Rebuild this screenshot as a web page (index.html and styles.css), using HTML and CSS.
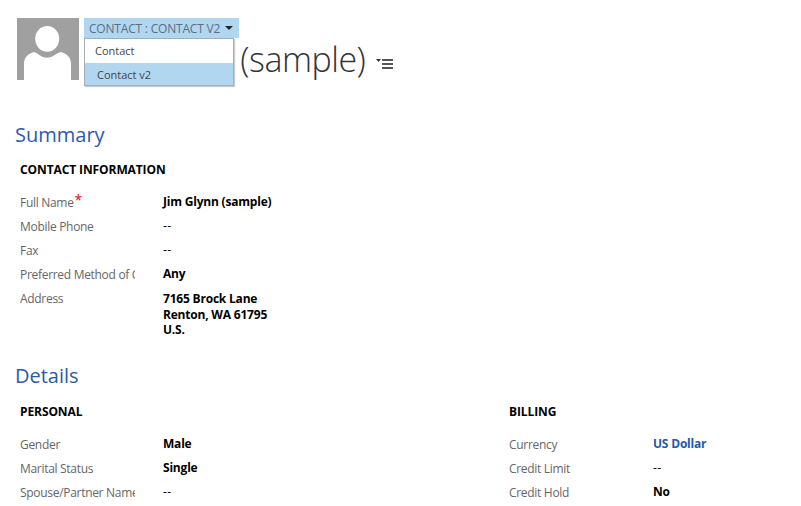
FILE: index.html
```html
<!DOCTYPE html>
<html lang="en">
<head>
  <meta charset="UTF-8" />
  <title>Jim Glynn (sample)</title>
  <link rel="stylesheet" href="styles.css">
</head>
<body>

<div class="page">
  <div class="header">
    <svg class="avatar" viewBox="0 0 62 62">
      <rect width="62" height="62" fill="#a0a0a0"/>
      <ellipse cx="30.200" cy="20.800" rx="12" ry="12.900" fill="#fff"/>
      <path d="M7 62V46c0-7 4-10 10-12 4 1 7 5.700 13 5.700S39 35 44 34c6 2 10 5 10 12v16z" fill="#fff"/>
    </svg>
    <div class="title-block">
      <div class="form-selector">
        <span>CONTACT : CONTACT V2</span>
        <span class="caret"></span>
      </div>
      <div class="form-menu">
        <div class="menu-item">Contact</div>
        <div class="menu-item selected">Contact v2</div>
      </div>
      <div class="title-row">
        <h1 class="record-name"><span class="first-name">Jim Glynn</span> (sample)</h1>
        <svg class="title-icon" viewBox="0 0 17 10">
          <path d="M0 0h5L2.500 3z" fill="#333"/>
          <path d="M6 0h11v2H6zM6 4h11v2H6zM6 8h11v2H6z" fill="#555"/>
        </svg>
      </div>
    </div>
  </div>

  <h2 class="section-title summary-title">Summary</h2>
  <div class="section-body">
    <h3 class="group-title">CONTACT INFORMATION</h3>
    <div class="fields">
      <div class="label">Full Name<span class="required">*</span></div>
      <div class="value">Jim Glynn (sample)</div>
      <div class="label">Mobile Phone</div>
      <div class="value empty">--</div>
      <div class="label">Fax</div>
      <div class="value empty">--</div>
      <div class="label">Preferred Method of Contact</div>
      <div class="value">Any</div>
      <div class="label">Address</div>
      <div class="value address">7165 Brock Lane<br>Renton, WA 61795<br>U.S.</div>
    </div>
  </div>

  <h2 class="section-title details-title">Details</h2>
  <div class="columns">
    <div class="column">
      <h3 class="group-title">PERSONAL</h3>
      <div class="fields">
        <div class="label">Gender</div>
        <div class="value">Male</div>
        <div class="label">Marital Status</div>
        <div class="value">Single</div>
        <div class="label">Spouse/Partner Name</div>
        <div class="value empty">--</div>
      </div>
    </div>
    <div class="column">
      <h3 class="group-title">BILLING</h3>
      <div class="fields">
        <div class="label">Currency</div>
        <div class="value link">US Dollar</div>
        <div class="label">Credit Limit</div>
        <div class="value empty">--</div>
        <div class="label">Credit Hold</div>
        <div class="value">No</div>
      </div>
    </div>
  </div>
</div>

</body>
</html>
```

FILE: styles.css
```css
* { box-sizing: border-box; }

html, body {
  margin: 0;
  height: 100%;
  overflow: hidden;
}

body {
  font-family: 'Open Sans', 'Noto Sans', sans-serif;
  font-size: 12px;
  color: #000;
  background: #fff;
}

.page {
  padding-top: 18px;
}

.header {
  display: flex;
  padding-left: 17px;
}

.avatar {
  width: 62px;
  height: 62px;
  flex: none;
}

.title-block {
  position: relative;
  margin-left: 5px;
}

.form-selector {
  display: inline-flex;
  align-items: center;
  gap: 5px;
  width: 155px;
  height: 20px;
  padding-left: 5px;
  background: #b1d6f0;
  color: #5d6d80;
  font-size: 12px;
  letter-spacing: -0.2px;
  white-space: nowrap;
}

.caret {
  width: 0;
  height: 0;
  border-left: 4px solid transparent;
  border-right: 4px solid transparent;
  border-top: 4px solid #222;
}

.form-menu {
  position: absolute;
  top: 20px;
  left: 0;
  width: 150px;
  height: 48px;
  background: #fff;
  border: 1px solid #a5adb8;
  box-shadow: 1px 1px 1px #ccc;
  z-index: 2;
}

.menu-item {
  height: 24px;
  line-height: 23px;
  padding-left: 10px;
  color: #444;
  font-size: 11px;
}

.menu-item.selected {
  height: 22px;
  background: #b1d6f0;
  padding-left: 12px;
}

.title-row {
  display: flex;
  align-items: center;
}

.record-name {
  margin: 0;
  padding-bottom: 2px;
  font-size: 34px;
  font-weight: 300;
  letter-spacing: -0.5px;
  line-height: 42px;
  color: #333;
  white-space: nowrap;
}

.first-name {
  display: inline-block;
  width: 148px;
  overflow: hidden;
  vertical-align: bottom;
}

.title-icon {
  width: 17px;
  height: 10px;
  margin: 8px 0 0 11px;
}

.section-title {
  margin: 0 0 0 15px;
  font-size: 20px;
  font-weight: 400;
  line-height: 28px;
  color: #2c5ba8;
}

.summary-title {
  margin-top: 39px;
}

.details-title {
  margin-top: 24px;
}

.section-body {
  padding-left: 20px;
}

.group-title {
  margin: 13px 0 13px;
  font-size: 12px;
  font-weight: 700;
  letter-spacing: -0.1px;
  line-height: 16px;
}

.fields {
  display: grid;
  grid-template-columns: 115px 1fr;
  column-gap: 28px;
  grid-auto-rows: minmax(24px, auto);
  align-items: start;
}

.label {
  color: #666;
  letter-spacing: -0.3px;
  line-height: 24px;
  white-space: nowrap;
  overflow: hidden;
}

.required {
  color: #f00000;
  font-size: 14px;
  line-height: 10px;
  margin-left: 1px;
  vertical-align: 2px;
}

.value {
  font-weight: 700;
  letter-spacing: -0.2px;
  line-height: 22px;
}

.empty {
  font-weight: 400;
  letter-spacing: 0.5px;
}

.address {
  line-height: 15.500px;
  padding-top: 4px;
}

.link {
  color: #1f5aa8;
}

.columns {
  display: flex;
  padding: 1px 0 0 20px;
}

.column {
  width: 489px;
}

.column + .column {
  width: auto;
  flex: 1;
}

.column + .column .fields {
  column-gap: 29px;
}
```
